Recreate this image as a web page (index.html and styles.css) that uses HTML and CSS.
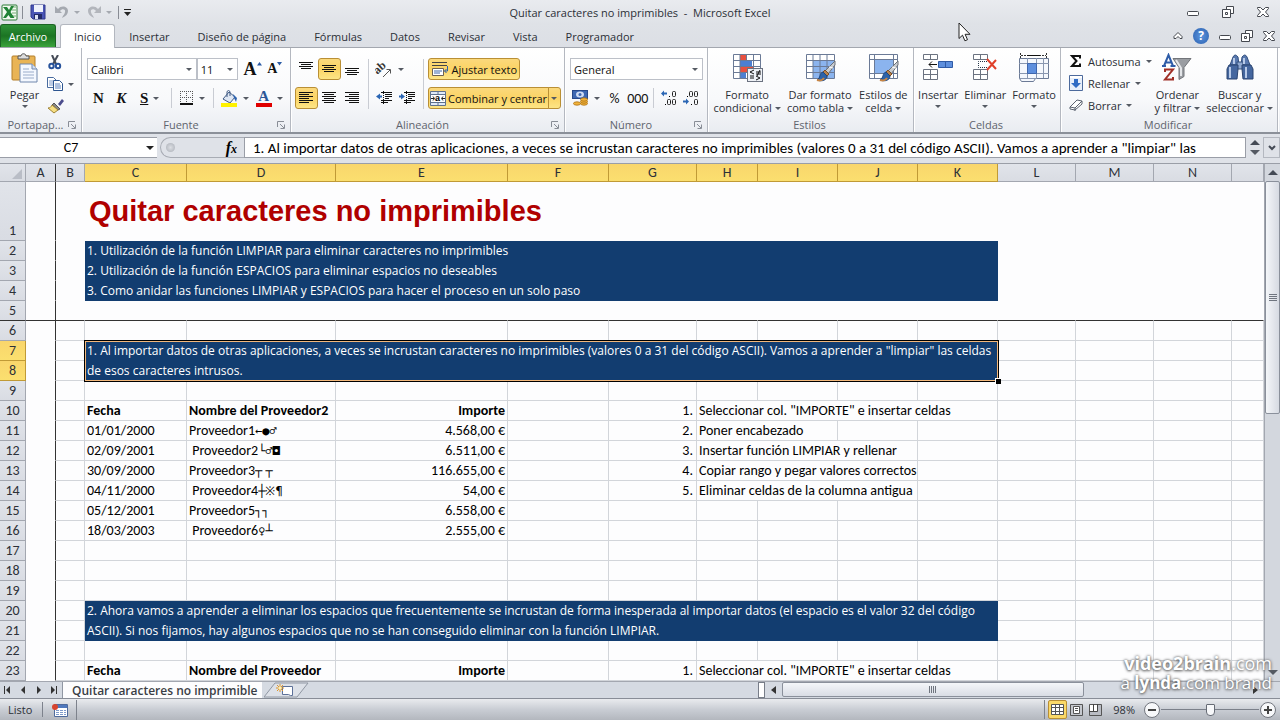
FILE: index.html
```html
<!DOCTYPE html>
<html lang="es">
<head>
  <meta charset="UTF-8">
  <meta name="viewport" content="width=device-width, initial-scale=1.0">
  <title>Quitar caracteres no imprimibles - Microsoft Excel</title>
  <link rel="stylesheet" href="styles.css">
</head>
<body>
  <header class="titlebar">
    <div class="quick">
      <svg width="17" height="17" viewBox="0 0 17 17"><rect x="1" y="1" width="15" height="15" rx="1" fill="#f3faf1" stroke="#2c7a37"/><path d="M11 3h4M11 6h4M11 9h4M11 12h4" stroke="#70ae72"/><path d="M2 3h4l2 3 2-4h3L9.500 8l4 6H9.500L7.500 11 5 14H2l4-6z" fill="#218336"/></svg>
      <span class="bar"></span>
      <button class="qbtn" aria-label="Guardar"><svg width="16" height="16" viewBox="0 0 16 16"><path d="M1 1h14v14H3l-2-2z" fill="#4a55b5" stroke="#30388d"/><rect x="4" y="1" width="9" height="7" fill="#eef1fb"/><rect x="4" y="10" width="8" height="5" fill="#222a66"/><rect x="5" y="11" width="3" height="4" fill="#dfe3f6"/></svg></button>
      <button class="qbtn wide" aria-label="Deshacer"><svg width="14" height="14" viewBox="0 0 14 14"><path d="M0 1v7h7L5 6c2-3 6-2 5 1 0 2-2 3-3 6 4-2 6-4 6-7 0-5-7-6-10-2z" fill="#a5a9b0"/></svg><i class="arrow dim"></i></button>
      <button class="qbtn wide" aria-label="Rehacer"><svg width="14" height="14" viewBox="0 0 14 14"><path d="M14 1v7H7l2-2C7 3 3 4 4 7c0 2 2 3 3 6-4-2-6-4-6-7 0-5 7-6 10-2z" fill="#b3b6bc"/></svg><i class="arrow dim"></i></button>
      <span class="bar"></span>
      <button class="qbtn more" aria-label="Personalizar"><svg width="7" height="7" viewBox="0 0 7 7"><path d="M0 0h7v1H0zM0 3h7L3.500 7z" fill="#222"/></svg></button>
    </div>
    <h1>Quitar caracteres no imprimibles&nbsp; -&nbsp; Microsoft Excel</h1>
    <div class="wincontrols">
      <button aria-label="Minimizar"><svg width="12" height="12"><use href="#w-min"/></svg></button>
      <button aria-label="Restaurar"><svg width="12" height="12"><use href="#w-res"/></svg></button>
      <button aria-label="Cerrar"><svg width="12" height="12"><use href="#w-close"/></svg></button>
    </div>
  </header>

  <svg class="defs" width="0" height="0">
    <symbol id="w-min" viewBox="0 0 12 12"><rect x=".5" y="5.500" width="11" height="4" rx="1" fill="#fff" stroke="#45484f"/></symbol>
    <symbol id="w-res" viewBox="0 0 12 12"><path d="M4.500 .5h7v7h-7z" fill="#fff" stroke="#45484f"/><path d="M.5 3.500h8v8h-8z" fill="#fff" stroke="#45484f"/><path d="M3.500 6.500h2v2h-2z" fill="none" stroke="#45484f"/></symbol>
    <symbol id="w-close" viewBox="0 0 12 12"><path d="M.5 1.500h3L6 4l2.500-2.500h3v1L8.500 6l3 3.500v1h-3L6 8l-2.500 2.500h-3v-1L3.500 6l-3-3.500z" fill="#fff" stroke="#45484f"/></symbol>
    <symbol id="launch" viewBox="0 0 8 8"><path d="M.5 6V.5H7M3 3l4 4M7.500 3.500v4h-4" fill="none" stroke="#888d96"/></symbol>
    <symbol id="brush" viewBox="0 0 20 22"><path d="M19 1 9 11l3 3 7-9z" fill="#c9cdd2" stroke="#6d7177"/><path d="m13 7 4 1" stroke="#fff"/><path d="m7 12 2-2 4 4-2 2z" fill="#b9824b" stroke="#7c4e25"/><path d="M7 12c-4 1-2 6-6 8 5 2 10 0 10-4z" fill="#2e63a8" stroke="#1d4680"/><path d="M1 20c3 1 6 0 7-2" stroke="#c78544" stroke-width="2" fill="none"/></symbol>
  </svg>

  <nav class="tabs">
    <button class="file">Archivo</button>
    <button class="tab active">Inicio</button>
    <button class="tab">Insertar</button>
    <button class="tab">Diseño de página</button>
    <button class="tab">Fórmulas</button>
    <button class="tab">Datos</button>
    <button class="tab">Revisar</button>
    <button class="tab">Vista</button>
    <button class="tab">Programador</button>
    <div class="tabtools">
      <button aria-label="Minimizar la cinta"><svg width="10" height="8" viewBox="0 0 10 8"><path d="M5 .5 9 4.500v2H7L5 4.500 3 6.500H1v-2z" fill="#fff" stroke="#45484f"/></svg></button>
      <button class="help" aria-label="Ayuda">?</button>
      <button aria-label="Minimizar libro"><svg width="12" height="12"><use href="#w-min"/></svg></button>
      <button aria-label="Restaurar libro"><svg width="12" height="12"><use href="#w-res"/></svg></button>
      <button aria-label="Cerrar libro"><svg width="12" height="12"><use href="#w-close"/></svg></button>
    </div>
  </nav>

  <section class="ribbon">
    <div class="group clipboard">
      <div class="body">
        <button class="big">
          <svg width="28" height="30" viewBox="0 0 28 30"><rect x="1" y="3" width="23" height="24" rx="1" fill="#e9b455" stroke="#b37f2b"/><path d="M7 6V3h3c0-3 5-3 5 0h3v3z" fill="#ddd" stroke="#555"/><path d="M9 11h12l5 5v13H9z" fill="#f4f8ff" stroke="#7088ad"/><path d="M21 11v5h5" fill="#d5e1f3" stroke="#7088ad"/><path d="M12 16h6M12 19h11M12 22h11M12 25h11" stroke="#9aacca"/></svg>
          <span>Pegar</span><i class="arrow"></i>
        </button>
        <div class="stack">
          <button class="small" aria-label="Cortar"><svg width="16" height="15" viewBox="0 0 16 15"><path d="m5 0 4 9M11 0 6 9" stroke="#454b57" stroke-width="2"/><circle cx="4.500" cy="11" r="2.200" fill="none" stroke="#27529b" stroke-width="2"/><circle cx="11" cy="11" r="2.200" fill="none" stroke="#27529b" stroke-width="2"/></svg></button>
          <button class="small" aria-label="Copiar"><svg width="16" height="14" viewBox="0 0 16 14"><path d="M.5 .5h6l3 3v7h-9z" fill="#fff" stroke="#486b9f"/><path d="M2 4h4M2 6h4M2 8h4" stroke="#7d9aca"/><path d="M6.500 3.500h6l3 3v7h-9z" fill="#fff" stroke="#2d5590"/><path d="M8 7h5M8 9h6M8 11h6" stroke="#5d82be"/></svg><i class="arrow"></i></button>
          <button class="small" aria-label="Copiar formato"><svg width="17" height="15" viewBox="0 0 17 15"><path d="m11 5 4-5 2 2-4 5z" fill="#4b4c8c"/><path d="m7 4 6 6-2 1-6-5z" fill="#888" stroke="#555"/><path d="m5 6 6 5-4 3-6-5c2 0 3-1 4-3z" fill="#f6df83" stroke="#9f8336"/></svg></button>
        </div>
      </div>
      <div class="caption"><span>Portapap...</span><button aria-label="Portapapeles"><svg width="8" height="8"><use href="#launch"/></svg></button></div>
    </div>

    <div class="group font">
      <div class="body lines">
        <div class="line">
          <label class="combo family"><select aria-label="Fuente"><option>Calibri</option></select><i class="arrow"></i></label>
          <label class="combo size"><select aria-label="Tamaño"><option>11</option></select><i class="arrow"></i></label>
          <button class="tool serif grow">A<svg width="5" height="4" viewBox="0 0 5 4"><path d="M0 3.500 2.500 0 5 3.500z" fill="#2a5aa5"/></svg></button>
          <button class="tool serif shrink">A<svg width="5" height="4" viewBox="0 0 5 4"><path d="M0 0h5L2.500 3.500z" fill="#2a5aa5"/></svg></button>
        </div>
        <div class="line">
          <button class="tool serif bold">N</button>
          <button class="tool serif italic">K</button>
          <button class="tool serif split"><u>S</u><i class="arrow"></i></button>
          <span class="sep"></span>
          <button class="tool split" aria-label="Bordes"><svg width="14" height="14" viewBox="0 0 14 14"><path d="M0 .5h13M0 6.500h13M.5 0v12M6.500 0v12M12.500 0v12" stroke="#555" stroke-dasharray="1 1"/><path d="M0 13h13" stroke="#111" stroke-width="2"/></svg><i class="arrow"></i></button>
          <span class="sep"></span>
          <button class="tool split" aria-label="Color de relleno"><svg width="17" height="17" viewBox="0 0 17 17"><path d="m8 2 6 5-5 6-7-4z" fill="#dfe7f3" stroke="#405a83"/><path d="M6 7V1.500q1.500-2 3 0V6" fill="none" stroke="#405a83"/><path d="m12 4 4 4-1 4-2-4z" fill="#2e62ad"/><path d="M0 13h16v4H0z" fill="#fff200"/></svg><i class="arrow"></i></button>
          <button class="tool split fontcolor" aria-label="Color de fuente"><b>A</b><i class="arrow"></i></button>
        </div>
      </div>
      <div class="caption"><span>Fuente</span><button aria-label="Más fuente"><svg width="8" height="8"><use href="#launch"/></svg></button></div>
    </div>

    <div class="group align">
      <div class="body">
        <div class="lines">
          <div class="line">
            <button class="tool" aria-label="Arriba"><svg width="14" height="14" viewBox="0 0 14 14"><path d="M0 .5h14M2 2.500h10M0 4.500h14M2 6.500h10" stroke="#111"/></svg></button>
            <button class="tool on" aria-label="Medio"><svg width="14" height="14" viewBox="0 0 14 14"><path d="M0 3.500h14M2 5.500h10M0 7.500h14M2 9.500h10" stroke="#111"/></svg></button>
            <button class="tool" aria-label="Abajo"><svg width="14" height="14" viewBox="0 0 14 14"><path d="M0 6.500h14M2 8.500h10M0 10.500h14M2 12.500h10" stroke="#111"/></svg></button>
          </div>
          <div class="line">
            <button class="tool on" aria-label="Izquierda"><svg width="14" height="14" viewBox="0 0 14 14"><path d="M0 1.500h14M0 3.500h10M0 5.500h14M0 7.500h10M0 9.500h14M0 11.500h10" stroke="#111"/></svg></button>
            <button class="tool" aria-label="Centrar"><svg width="14" height="14" viewBox="0 0 14 14"><path d="M0 1.500h14M2 3.500h10M0 5.500h14M2 7.500h10M0 9.500h14M2 11.500h10" stroke="#111"/></svg></button>
            <button class="tool" aria-label="Derecha"><svg width="14" height="14" viewBox="0 0 14 14"><path d="M0 1.500h14M4 3.500h10M0 5.500h14M4 7.500h10M0 9.500h14M4 11.500h10" stroke="#111"/></svg></button>
          </div>
        </div>
        <span class="sep tall"></span>
        <div class="lines">
          <div class="line">
            <button class="tool split" aria-label="Orientación"><svg width="18" height="18" viewBox="0 0 18 18"><text x="0" y="11" font-size="12" font-weight="bold" font-family="Liberation Serif, serif" fill="#333" transform="rotate(-42 6 10)">ab</text><path d="m8 17 7-7M11.500 9.500h4v4" stroke="#555" fill="none"/></svg><i class="arrow"></i></button>
          </div>
          <div class="line">
            <button class="tool" aria-label="Disminuir sangría"><svg width="16" height="14" viewBox="0 0 16 14"><path d="M5 1.500h11M9 3.500h7M9 5.500h7M9 7.500h4M5 9.500h11M5 11.500h7" stroke="#111"/><path d="M7.500 0v14" stroke="#111" stroke-dasharray="1 1"/><path d="m0 5.500 4-3v2h2v2H4v2z" fill="#2b66b4"/></svg></button>
            <button class="tool" aria-label="Aumentar sangría"><svg width="16" height="14" viewBox="0 0 16 14"><path d="M5 1.500h11M9 3.500h7M9 5.500h7M9 7.500h4M5 9.500h11M5 11.500h7" stroke="#111"/><path d="M7.500 0v14" stroke="#111" stroke-dasharray="1 1"/><path d="m6 5.500-4-3v2H0v2h2v2z" fill="#2b66b4"/></svg></button>
          </div>
        </div>
        <span class="sep tall"></span>
        <div class="lines">
          <div class="line">
            <button class="tool on text wrap"><svg width="17" height="16" viewBox="0 0 17 16"><path d="M0 1.500h15M0 4.500h15" stroke="#444"/><path d="M.5 7.500h11v7H.5z" fill="#fff" stroke="#6c6252"/><path d="M2 10h8M2 12h6" stroke="#3c68aa"/><path d="M15.500 5v5h-3m2-2-2 2 2 2" stroke="#2f60a8" fill="none"/></svg>Ajustar texto</button>
          </div>
          <div class="line">
            <button class="tool on text merge"><svg width="16" height="15" viewBox="0 0 16 15"><path d="M.5 .5h15v14H.5z" fill="#dfe9f8" stroke="#5f718c"/><path d="M1 3.500h15M1 11.500h15M8 1v3M8 11v3" stroke="#5f718c"/><path d="M1 4h14v7H1z" fill="#fff"/><path d="M1 7.500h3m-1-2 1.500 2L3 9.500M15 7.500h-3m1-2-1.500 2 1.500 2" stroke="#222" fill="none"/><text x="5" y="10" font-size="9" font-weight="bold" font-family="Liberation Sans, sans-serif">a</text></svg>Combinar y centrar</button><button class="tool on drop" aria-label="Opciones de combinar"><i class="arrow"></i></button>
          </div>
        </div>
      </div>
      <div class="caption"><span>Alineación</span><button aria-label="Más alineación"><svg width="8" height="8"><use href="#launch"/></svg></button></div>
    </div>

    <div class="group number">
      <div class="body lines">
        <div class="line"><label class="combo format"><select aria-label="Formato de número"><option>General</option></select><i class="arrow"></i></label></div>
        <div class="line">
          <button class="tool split" aria-label="Moneda"><svg width="17" height="16" viewBox="0 0 17 16"><rect x=".5" y=".5" width="15" height="8" fill="#3e68b2" stroke="#27488a"/><ellipse cx="8" cy="4.500" rx="4" ry="3" fill="#cfdcf4"/><circle cx="8" cy="4.500" r="1.500" fill="#3e68b2"/><g fill="#f2b33a" stroke="#a96f11" stroke-width=".8"><ellipse cx="12" cy="13.500" rx="3.500" ry="1.700"/><ellipse cx="12" cy="11.500" rx="3.500" ry="1.700"/><ellipse cx="12" cy="9.500" rx="3.500" ry="1.700"/><ellipse cx="5" cy="13.500" rx="3.500" ry="1.700"/></g></svg><i class="arrow"></i></button>
          <button class="tool num">%</button>
          <button class="tool num">000</button>
          <span class="sep"></span>
          <button class="tool dec" aria-label="Aumentar decimales"><svg width="17" height="16" viewBox="0 0 17 16"><path d="m0 3.500 3-3v2h3v2H3v2z" fill="#2b66b4"/><g fill="none" stroke="#222"><rect x="11.500" y="1.500" width="3" height="5" rx="1"/><rect x="6.500" y="9.500" width="3" height="5" rx="1"/><rect x="11.500" y="9.500" width="3" height="5" rx="1"/></g><path d="M8 6h1v1H8zM4 14h1v1H4z"/></svg></button>
          <button class="tool dec" aria-label="Disminuir decimales"><svg width="17" height="16" viewBox="0 0 17 16"><path d="m6 11.500-3-3v2H0v2h3v2z" fill="#2b66b4"/><g fill="none" stroke="#222"><rect x="6.500" y="1.500" width="3" height="5" rx="1"/><rect x="11.500" y="1.500" width="3" height="5" rx="1"/><rect x="11.500" y="9.500" width="3" height="5" rx="1"/></g><path d="M4 6h1v1H4zM8 14h1v1H8z"/></svg></button>
        </div>
      </div>
      <div class="caption"><span>Número</span><button aria-label="Más número"><svg width="8" height="8"><use href="#launch"/></svg></button></div>
    </div>

    <div class="group styles">
      <div class="body">
        <button class="big"><svg width="32" height="30" viewBox="0 0 32 30"><path d="M2.500 1.500h27v24h-27z" fill="#fff"/><path d="M9 2h7v5H9z" fill="#e8503f"/><path d="M9 8h12v5H9z" fill="#4d7fd2"/><path d="M9 14h13v5H9z" fill="#e8503f"/><path d="M9 20h6v5H9z" fill="#4d7fd2"/><path d="M2.500 1.500h27v24h-27zM2 7.500h28M2 13.500h28M2 19.500h28M9 1v24M15.500 1v6M22.500 1v24" fill="none" stroke="#6b7a96"/><rect x="16.500" y="15.500" width="15" height="13" fill="#eef1f6" stroke="#6b7280"/><path d="m23 17-4 2 4 2m-4 2h4m-4 2h4M25 19h5m-5 2h5m-1-4-3 6M25 23l4 2-4 2" stroke="#111" fill="none"/></svg><span>Formato<br>condicional<i class="arrow"></i></span></button>
        <button class="big"><svg width="32" height="30" viewBox="0 0 32 30"><path d="M2.500 1.500h28v24h-28z" fill="#fff"/><path d="M9 8h21v17H9z" fill="#8bb4ee"/><path d="M2.500 1.500h28v24h-28zM2 7.500h28M2 13.500h28M2 19.500h28M9 1v24M16 1v24M23 1v24" fill="none" stroke="#6b7a96"/><svg x="12" y="7" width="20" height="22"><use href="#brush"/></svg></svg><span>Dar formato<br>como tabla<i class="arrow"></i></span></button>
        <button class="big"><svg width="32" height="30" viewBox="0 0 32 30"><path d="M2.500 1.500h28v24h-28z" fill="#fff"/><path d="M7 6h20v14H7z" fill="#8bb4ee"/><path d="M2.500 1.500h28v24h-28zM2 6.500h28M2 20.500h28M7.500 1v24M26.500 1v24" fill="none" stroke="#6b7a96"/><svg x="12" y="7" width="20" height="22"><use href="#brush"/></svg></svg><span>Estilos de<br>celda<i class="arrow"></i></span></button>
      </div>
      <div class="caption"><span>Estilos</span></div>
    </div>

    <div class="group cells">
      <div class="body">
        <button class="big"><svg width="32" height="30" viewBox="0 0 32 30"><path d="M1.500 1.500h14v5h-14zM8.500 1v6M1.500 16.500h14v10h-14zM8.500 16v11M1 21.500h15" fill="#fff" stroke="#6b7280"/><path d="M16.500 8.500h14v6h-14z" fill="#5e8fdd" stroke="#2f5aa5"/><path d="M23.500 9v6" stroke="#2f5aa5"/><path d="M7 11.500h8m-5-3-3 3 3 3" fill="none" stroke="#111"/></svg><span>Insertar</span><i class="arrow"></i></button>
        <button class="big"><svg width="30" height="30" viewBox="0 0 30 30"><path d="M3.500 1.500h14v5h-14zM10.500 1v6M3.500 16.500h14v10h-14zM10.500 16v11M3 21.500h15" fill="#fff" stroke="#6b7280"/><path d="M17 8.500H8.500v6H17" fill="none" stroke="#234" stroke-dasharray="1 1"/><path d="m17 6 9 10M26 7l-9 10" stroke="#e0402a" stroke-width="2"/></svg><span>Eliminar</span><i class="arrow"></i></button>
        <button class="big"><svg width="32" height="30" viewBox="0 0 32 30"><path d="M2.500 0v5M28.500 0v5M3 2.500h25" stroke="#333" stroke-dasharray="2 1"/><path d="M9 2.500h13" stroke="#111"/><path d="M1.500 5.500h29v20h-13l-2 3H3.500l-2-3z" fill="#f5f8fd" stroke="#6b7a96"/><path d="M1 10.500h30M1 20.500h30M1 25.500h18M9.500 5v20M18.500 5v20M25.500 5v20" stroke="#8997b0"/><path d="M9.500 10.500h9v10h-9z" fill="#5e8fdd" stroke="#3e66ad"/></svg><span>Formato</span><i class="arrow"></i></button>
      </div>
      <div class="caption"><span>Celdas</span></div>
    </div>

    <div class="group edit">
      <div class="body">
        <div class="stack">
          <button class="small"><svg width="14" height="14" viewBox="0 0 14 14"><path d="M11 4.500V2H3l4.500 5L3 12h8V9.500" fill="none" stroke="#111" stroke-width="2"/></svg>Autosuma<i class="arrow"></i></button>
          <button class="small"><svg width="14" height="16" viewBox="0 0 14 16"><path d="M.5 .5h13v15H.5z" fill="#e8effa" stroke="#4d6a9c"/><path d="M1 1h12v2H1z" fill="#fff"/><path d="M5 4h4v4h3l-5 5-5-5h3z" fill="#2f6bc4"/></svg>Rellenar<i class="arrow"></i></button>
          <button class="small"><svg width="14" height="14" viewBox="0 0 14 14"><path d="m1 9 7-7 5 1v3l-7 6-5-1z" fill="#fff" stroke="#5b6270"/><path d="m1 9 5 1 7-7M6 10v3" stroke="#5b6270" fill="none"/></svg>Borrar<i class="arrow"></i></button>
        </div>
        <button class="big sort"><svg width="30" height="30" viewBox="0 0 30 30"><path d="M11 5.500h18l-7 9v9l-5 3v-12z" fill="#9a9da2" stroke="#72757a"/><path d="m14 7 5 8v8" stroke="#e4e6e9" fill="none" stroke-width="2"/><path d="M2 13 6.500 2 11 13M4 9.500h5M0 13h4M8.500 13h5" stroke="#2e5ca8" stroke-width="2" fill="none"/><path d="M3 19v-2.500h8l-8 10h8V24" stroke="#a03028" stroke-width="2" fill="none"/></svg><span>Ordenar<br>y filtrar<i class="arrow"></i></span></button>
        <button class="big find"><svg width="30" height="30" viewBox="0 0 30 30"><path d="M8 4q2-4 5 0l1 8H5zM22 4q-2-4-5 0l-1 8h9z" fill="#5878ae" stroke="#33507f"/><path d="M12 9h6v7h-6z" fill="#8fa8d0" stroke="#33507f"/><path d="M4 12h9v4l-1 10H2V16zM26 12h-9v4l1 10h10V16z" fill="#45679f" stroke="#2a4470"/><path d="M5 14v11M21 14v11M9 5v6M19 5v6" stroke="#b9cbe8" stroke-width="2"/></svg><span>Buscar y<br>seleccionar<i class="arrow"></i></span></button>
      </div>
      <div class="caption"><span>Modificar</span></div>
    </div>
  </section>

  <section class="formulabar">
    <label class="namebox"><input value="C7" aria-label="Cuadro de nombres"><i class="arrow black"></i></label>
    <button class="fx" aria-label="Insertar función"><span class="knob"></span><span class="fxtext">f<small>x</small></span></button>
    <input class="formula" aria-label="Fórmula" value="1. Al importar datos de otras aplicaciones, a veces se incrustan caracteres no imprimibles (valores 0 a 31 del código ASCII). Vamos a aprender a &quot;limpiar&quot; las">
    <div class="spin"><i class="arrow up"></i><i class="arrow"></i></div>
    <button class="expand" aria-label="Expandir"><svg width="8" height="6" viewBox="0 0 8 6"><path d="m1 1 3 3 3-3" fill="none" stroke="#444a55" stroke-width="2"/></svg></button>
  </section>

  <main class="workbook">
    <table class="sheet">
      <colgroup>
        <col class="c-row"><col class="c-a"><col class="c-b"><col class="c-c"><col class="c-d"><col class="c-e"><col class="c-f"><col class="c-g"><col class="c-h"><col class="c-i"><col class="c-i"><col class="c-i"><col class="c-l"><col class="c-l"><col class="c-l"><col>
      </colgroup>
      <thead><tr id="letters"><th class="corner"><svg width="10" height="10" viewBox="0 0 10 10"><path d="M10 0v10H0z" fill="#b9bdc6"/></svg></th></tr></thead>
      <tbody id="rows"></tbody>
    </table>
    <div class="vscroll">
      <button aria-label="Subir"><i class="arrow up"></i></button>
      <div class="vthumb"><span></span></div>
      <button class="down" aria-label="Bajar"><i class="arrow"></i></button>
    </div>
  </main>

  <footer>
    <div class="sheettabs">
      <div class="navs">
        <button aria-label="Primera"><svg width="8" height="8" viewBox="0 0 8 8"><path d="M0 0h1v8H0zM6 0v8L2 4z"/></svg></button>
        <button aria-label="Anterior"><svg width="8" height="8" viewBox="0 0 8 8"><path d="M6 0v8L2 4z"/></svg></button>
        <button aria-label="Siguiente"><svg width="8" height="8" viewBox="0 0 8 8"><path d="M2 0v8l4-4z"/></svg></button>
        <button aria-label="Última"><svg width="8" height="8" viewBox="0 0 8 8"><path d="M1 0v8l4-4zM6 0h1v8H6z"/></svg></button>
      </div>
      <button class="sheettab">Quitar caracteres no imprimible</button>
      <button class="newtab" aria-label="Insertar hoja"><svg width="46" height="16" viewBox="0 0 46 16"><path d="M0 15 11 1h33L33 15z" fill="#dde1e8" stroke="#9097a3"/><path d="M18.500 4.500h10v9h-2l-2-1h-6z" fill="#fff" stroke="#5d7199"/><path d="M16 2v8M12 6h8M13 3l6 6M19 3l-6 6" stroke="#e0962b"/><circle cx="16" cy="6" r="1.500" fill="#fff3b0"/></svg></button>
      <span class="splitter"></span>
      <div class="hscroll">
        <button aria-label="Izquierda"><svg width="5" height="8" viewBox="0 0 5 8"><path d="M5 0v8L0 4z" fill="#333"/></svg></button>
        <div class="track"><div class="hthumb"><span></span></div></div>
        <button aria-label="Derecha"><svg width="5" height="8" viewBox="0 0 5 8"><path d="M0 0v8l5-4z" fill="#333"/></svg></button>
      </div>
    </div>
    <div class="status">
      <span class="ready">Listo</span>
      <button class="macro" aria-label="Grabar macro"><svg width="16" height="14" viewBox="0 0 16 14"><path d="M2.500 1.500h13v12h-13z" fill="#fff" stroke="#4e6a9c"/><path d="M3 2h12v3H3z" fill="#4f78bd"/><path d="M4 7.500h3M8 7.500h3M12 7.500h2M4 9.500h3M8 9.500h3M12 9.500h2M4 11.500h3M8 11.500h3M12 11.500h2" stroke="#7f9ccc"/><circle cx="3" cy="4" r="3" fill="#d8442e"/></svg></button>
      <div class="views">
        <button class="on" aria-label="Normal"><svg width="13" height="11" viewBox="0 0 13 11"><path d="M.5 .5h12v10H.5zM0 3.500h13M0 7.500h13M4.500 0v11M8.500 0v11" fill="#fff" stroke="#555"/></svg></button>
        <button aria-label="Diseño de página"><svg width="13" height="12" viewBox="0 0 13 12"><path d="M.5 .5h12v11H.5z" fill="#c5c8ce" stroke="#555"/><path d="M3.500 2.500h6v7h-6z" fill="#fff" stroke="#555"/><path d="M5 4.500h3M5 6.500h3" stroke="#555"/></svg></button>
        <button aria-label="Salto de página"><svg width="13" height="12" viewBox="0 0 13 12"><path d="M.5 .5h12v11H.5z" fill="#b9bcc3" stroke="#555"/><path d="M1 1h3v6H1zM5 1h3v6H5z" fill="#fff"/><path d="M4.500 0v7M8.500 0v7.500H0" stroke="#444" fill="none"/></svg></button>
      </div>
      <label class="zoomvalue" for="zoom">98%</label>
      <button class="round" aria-label="Alejar"><svg width="16" height="16" viewBox="0 0 16 16"><circle cx="8" cy="8" r="7.500" fill="#f7f8fa" stroke="#72767e"/><path d="M4 8h8" stroke="#444" stroke-width="2"/></svg></button>
      <input type="range" id="zoom" min="10" max="190" value="102">
      <button class="round" aria-label="Acercar"><svg width="16" height="16" viewBox="0 0 16 16"><circle cx="8" cy="8" r="7.500" fill="#f7f8fa" stroke="#72767e"/><path d="M4 8h8M8 4v8" stroke="#444" stroke-width="2"/></svg></button>
    </div>
  </footer>

  <svg class="pointer" width="13" height="20" viewBox="0 0 13 20"><path d="M1 1v15.500l3.500-3.300 2.400 5.600 2.600-1.100-2.400-5.400H12z" fill="#fff" stroke="#222"/></svg>
  <div class="watermark"><p><b>video2brain</b>.com</p><p>a <b>lynda</b>.com brand</p></div>

<script>
const letters = 'ABCDEFGHIJKLMNO'.split('');
// row -> { column: [text, class, colspan, rowspan] }
const cells = {
  1: { C: ['Quitar caracteres no imprimibles', 'title', 9] },
  2: { C: ['1. Utilización de la función LIMPIAR para eliminar caracteres no imprimibles', 'blue', 9] },
  3: { C: ['2. Utilización de la función ESPACIOS para eliminar espacios no deseables', 'blue', 9] },
  4: { C: ['3. Como anidar las funciones LIMPIAR y ESPACIOS para hacer el proceso en un solo paso', 'blue', 9] },
  7: { C: ['1. Al importar datos de otras aplicaciones, a veces se incrustan caracteres no imprimibles (valores 0 a 31 del código ASCII). Vamos a aprender a "limpiar" las celdas de esos caracteres intrusos.', 'blue selected', 9, 2] },
  10: { C: ['Fecha', 'strong'], D: ['Nombre del Proveedor2', 'strong'], E: ['Importe', 'strong right'], G: ['1.', 'right item'], H: ['Seleccionar col. "IMPORTE" e insertar celdas', '', 4] },
  11: { C: ['01/01/2000'], D: ['Proveedor1<s>←●♂</s>'], E: ['4.568,00 €', 'right'], G: ['2.', 'right item'], H: ['Poner encabezado', '', 2] },
  12: { C: ['02/09/2001'], D: ['&nbsp;Proveedor2<s>└♂◘</s>'], E: ['6.511,00 €', 'right'], G: ['3.', 'right item'], H: ['Insertar función LIMPIAR y rellenar', '', 3] },
  13: { C: ['30/09/2000'], D: ['Proveedor3<s>┬</s> <s>┬</s>'], E: ['116.655,00 €', 'right'], G: ['4.', 'right item'], H: ['Copiar rango y pegar valores correctos', '', 3] },
  14: { C: ['04/11/2000'], D: ['&nbsp;Proveedor4<s>┼※¶</s>'], E: ['54,00 €', 'right'], G: ['5.', 'right item'], H: ['Eliminar celdas de la columna antigua', '', 3] },
  15: { C: ['05/12/2001'], D: ['Proveedor5<s>┐┐</s>'], E: ['6.558,00 €', 'right'] },
  16: { C: ['18/03/2003'], D: ['&nbsp;Proveedor6<s>♀┴</s>'], E: ['2.555,00 €', 'right'] },
  20: { C: ['2. Ahora vamos a aprender a eliminar los espacios que frecuentemente se incrustan de forma inesperada al importar datos (el espacio es el valor 32 del código ASCII). Si nos fijamos, hay algunos espacios que no se han conseguido eliminar con la función LIMPIAR.', 'blue', 9, 2] },
  23: { C: ['Fecha', 'strong'], D: ['Nombre del Proveedor', 'strong'], E: ['Importe', 'strong right'], G: ['1.', 'right item'], H: ['Seleccionar col. "IMPORTE" e insertar celdas', '', 4] }
};

const head = document.getElementById('letters');
letters.forEach(l => {
  const th = document.createElement('th');
  th.textContent = l === 'O' ? '' : l;
  if (l >= 'C' && l <= 'K') th.className = 'hot';
  if (l === 'A') th.className = 'freeze';
  head.appendChild(th);
});

const tbody = document.getElementById('rows');
let covered = 0; // row whose C:K is taken by the merged block above
for (let r = 1; r <= 23; r++) {
  const tr = document.createElement('tr');
  tr.className = r === 1 ? 'frozen first' : r === 5 ? 'frozen last' : r < 5 ? 'frozen' : '';
  const hot = r === 7 || r === 8 ? ' class="hot"' : '';
  let html = `<th${hot}>${r}</th>`;
  for (let c = 0; c < letters.length; c++) {
    const l = letters[c];
    if (covered === r && l === 'C') { c += 8; continue; }
    const [text = '', cls = '', span = 1, down = 1] = (cells[r] || {})[l] || [];
    html += `<td class="${l === 'A' ? 'a' : cls}" colspan="${span}" rowspan="${down}">${text}</td>`;
    if (down > 1) covered = r + 1;
    c += span - 1;
  }
  tr.innerHTML = html;
  tbody.appendChild(tr);
}
</script>
</body>
</html>
```
FILE: styles.css
```css
* {
  box-sizing: border-box;
}
body {
  margin: 0;
  height: 100vh;
  display: flex;
  flex-direction: column;
  overflow: hidden;
  position: relative;
  background: #dfe2e8;
  color: #2b2f36;
  font-family: "Open Sans", "Noto Sans", sans-serif;
  font-size: 11px;
}
button {
  border: none;
  background: none;
  padding: 0;
  margin: 0;
  font: inherit;
  color: inherit;
  display: flex;
  align-items: center;
  justify-content: center;
}
svg {
  flex: none;
  display: block;
}
.defs {
  position: absolute;
}
.arrow {
  display: inline-block;
  flex: none;
  border: 3px solid transparent;
  border-top-color: #555a63;
  border-bottom: 0;
}
.arrow.dim {
  border-top-color: #a5a9b0;
}
.arrow.black {
  border-width: 4px 4px 0;
  border-top-color: #222;
}
.arrow.up {
  border-top: 0;
  border-bottom: 3px solid #444a55;
}

/* title bar */
.titlebar {
  flex: none;
  height: 24px;
  display: grid;
  grid-template-columns: 1fr auto 1fr;
  align-items: center;
  background: linear-gradient(#e9ebef, #dfe2e7);
}
.titlebar h1 {
  margin: 0;
  font-size: 11px;
  font-weight: normal;
}
.quick {
  display: flex;
  align-items: center;
  gap: 2px;
  padding-left: 1px;
}
.bar {
  width: 1px;
  height: 13px;
  margin-left: 2px;
  background: #888c94;
}
.qbtn {
  width: 25px;
  height: 20px;
}
.qbtn.wide {
  width: 30px;
  gap: 5px;
}
.qbtn.more {
  width: 13px;
}
.wincontrols {
  display: flex;
  justify-content: flex-end;
  gap: 23px;
  padding-right: 11px;
}

/* ribbon tabs */
.tabs {
  flex: none;
  height: 24px;
  display: flex;
  align-items: stretch;
  border-bottom: 1px solid #a3a7af;
  background: linear-gradient(#dfe2e7, #dcdfe5);
}
.file {
  width: 56px;
  margin-right: 4px;
  border: 1px solid #1c6424;
  border-bottom: 0;
  border-radius: 3px 3px 0 0;
  background: linear-gradient(#2f9138, #1b7423 50%, #3ba33b);
  color: #fff;
}
.tab {
  padding: 0 13px;
  border: 1px solid transparent;
  border-bottom: 0;
  white-space: nowrap;
}
.tab.active {
  margin-bottom: -1px;
  border-color: #b3b7bf;
  border-radius: 3px 3px 0 0;
  background: #fff;
}
.tabtools {
  margin-left: auto;
  display: flex;
  align-items: center;
  gap: 10px;
  padding-right: 5px;
}
.help {
  width: 16px;
  height: 16px;
  border-radius: 50%;
  background: radial-gradient(#5c95dd, #2a60b0);
  color: #fff;
  font-size: 12px;
  font-weight: bold;
}

/* ribbon */
.ribbon {
  flex: none;
  height: 86px;
  display: flex;
  border-bottom: 2px solid #8b9099;
  background: linear-gradient(#fff, #f8f9fb 60%, #e9ecf1);
}
.group {
  flex: none;
  display: flex;
  flex-direction: column;
  border-right: 1px solid #b4b8c0;
  box-shadow: 1px 0 #fff;
}
.group .body {
  flex: 1;
  min-height: 0;
  display: flex;
  justify-content: center;
}
.clipboard { width: 82px; }
.font { width: 209px; }
.align { width: 274px; }
.number { width: 143px; }
.styles { width: 206px; }
.cells { width: 147px; }
.edit { width: 217px; }
.caption {
  flex: none;
  height: 15px;
  display: flex;
  align-items: center;
  padding: 0 5px 0 3px;
  color: #5f646d;
}
.caption span {
  flex: 1;
  text-align: center;
}
.lines {
  padding: 10px 4px 0 5px;
}
.group .body.lines {
  flex-direction: column;
  justify-content: flex-start;
}
.align .lines {
  padding: 10px 0 0;
}
.line {
  display: flex;
  align-items: center;
  height: 22px;
  margin-bottom: 7px;
}
.sep {
  width: 1px;
  height: 20px;
  margin: 0 4px;
  background: #c9ccd3;
}
.sep.tall {
  height: 50px;
  margin: 11px 4px 0;
}
.combo {
  display: grid;
  align-items: center;
  height: 22px;
  border: 1px solid #bcc0c8;
  background: #fff;
}
.combo > * {
  grid-area: 1 / 1;
}
.combo .arrow {
  justify-self: end;
  margin-right: 4px;
}
.combo select {
  appearance: none;
  width: 100%;
  border: 0;
  padding: 0 3px;
  background: none;
  color: #111;
  font: inherit;
}
.family { width: 113px; }
.size { width: 43px; }
.format { width: 134px; }
.tool {
  height: 22px;
  width: 23px;
  color: #111;
}
.tool.on {
  border: 1px solid #b98f35;
  border-radius: 3px;
  background: linear-gradient(#fbd97c, #fbd465 50%, #fde586);
}
.tool.split {
  width: 34px;
  gap: 5px;
}
.tool.text {
  width: auto;
  padding: 0 2px 0 3px;
  gap: 3px;
  white-space: nowrap;
}
.tool.merge {
  width: 121px;
  gap: 2px;
  border-radius: 3px 0 0 3px;
}
.tool.drop {
  width: 13px;
  margin-left: -1px;
  border-radius: 0 3px 3px 0;
}
.tool.num {
  width: 24px;
  font-family: Carlito, Lato, sans-serif;
  font-size: 14px;
}
.tool.serif {
  font-family: "Liberation Serif", serif;
  font-size: 15px;
  font-weight: bold;
}
.tool.italic {
  font-style: italic;
}
.tool.grow {
  margin-left: 3px;
  font-size: 18px;
}
.tool.shrink {
  font-size: 14px;
}
.grow svg, .shrink svg {
  align-self: flex-start;
  margin-top: 4px;
}
.fontcolor b {
  width: 16px;
  border-bottom: 4px solid #e00000;
  color: #2b5797;
  font-family: "Liberation Serif", serif;
  font-size: 15px;
  line-height: 13px;
}
.big {
  flex-direction: column;
  justify-content: flex-start;
  padding: 5px 3px 0;
  line-height: 13px;
  white-space: nowrap;
}
.big svg {
  margin-bottom: 5px;
}
.big > .arrow {
  margin-top: 4px;
}
.big span .arrow {
  margin-left: 3px;
  vertical-align: 2px;
}
.stack {
  display: flex;
  flex-direction: column;
  padding: 3px 0 0;
}
.small {
  height: 22px;
  gap: 5px;
  justify-content: flex-start;
  padding-left: 5px;
}
.edit .stack {
  padding: 2px 0 0 2px;
}

/* formula bar */
.formulabar {
  flex: none;
  height: 30px;
  display: flex;
  align-items: stretch;
  padding: 3px 0 5px;
  border-bottom: 1px solid #9a9ea7;
  background: #dfe2e8;
  color: #000;
  font-family: Carlito, Lato, sans-serif;
  font-size: 15px;
}
.formulabar input {
  border: 0;
  padding: 0;
  background: none;
  color: #000;
  font: inherit;
}
.namebox {
  width: 157px;
  display: flex;
  align-items: center;
  border-top: 1px solid #9a9ea7;
  border-bottom: 1px solid #9a9ea7;
  background: #fff;
}
.formulabar .namebox input {
  width: 142px;
  text-align: center;
  font-size: 14px;
}
.namebox .arrow {
  margin-left: 4px;
}
.fx {
  width: 84px;
  margin-left: 3px;
  padding: 0 7px 0 5px;
  justify-content: space-between;
  border: 1px solid #a8acb4;
  border-right: 0;
  border-radius: 11px 0 0 11px;
}
.knob {
  width: 9px;
  height: 9px;
  border-radius: 50%;
  background: radial-gradient(#dcdfe4, #a9adb5);
}
.fxtext {
  font: italic bold 16px "Liberation Serif", serif;
}
.fxtext small {
  font-size: 12px;
}
.formulabar .formula {
  flex: 1;
  min-width: 0;
  padding-left: 8px;
  border: 1px solid #9a9ea7;
  background: #fff;
}
.spin {
  width: 17px;
  display: flex;
  flex-direction: column;
  align-items: center;
  justify-content: space-around;
}
.spin .arrow {
  border-left-width: 5px;
  border-right-width: 5px;
}
.spin .arrow, .vscroll .down .arrow {
  border-top-width: 5px;
}
.spin .arrow.up, .vscroll .arrow.up {
  border-top-width: 0;
  border-bottom-width: 5px;
}
.expand {
  width: 17px;
  border: 1px solid #b4b8c0;
}

/* grid */
.workbook {
  flex: 1;
  min-height: 0;
  display: flex;
  overflow: hidden;
}
.sheet {
  flex: 1;
  width: 100%;
  table-layout: fixed;
  border-collapse: separate;
  border-spacing: 0;
  background: #fdfdfe;
  color: #000;
  font-family: Carlito, Lato, sans-serif;
  font-size: 14px;
}
.c-row { width: 26px; }
.c-a { width: 30px; }
.c-b { width: 29px; }
.c-c { width: 102px; }
.c-d { width: 149px; }
.c-e { width: 172px; }
.c-f { width: 101px; }
.c-g { width: 88px; }
.c-h { width: 61px; }
.c-i { width: 80px; }
.c-l { width: 78px; }
.sheet th {
  padding: 0;
  border-right: 1px solid #a3a7b0;
  border-bottom: 1px solid #a3a7b0;
  background: linear-gradient(#e1e4ea, #d9dce3);
  color: #2d3138;
  font-weight: normal;
  line-height: 17px;
}
.sheet tbody th {
  vertical-align: bottom;
  line-height: 19px;
}
.sheet th.corner svg {
  margin: 3px 0 0 12px;
}
.sheet th.freeze {
  border-right-color: #333;
}
.sheet th.hot {
  border-color: #c09a36;
  background: linear-gradient(#f9d66c, #fbdf6f);
}
.sheet td {
  height: 20px;
  padding: 0 2px;
  border-right: 1px solid #d2d5da;
  border-bottom: 1px solid #d2d5da;
  line-height: 19px;
  white-space: nowrap;
}
.sheet .a {
  border-right-color: #333;
  border-bottom-color: transparent;
}
.frozen td {
  border-color: transparent;
}
.first td {
  height: 59px;
}
.sheet .last td, .sheet .last th {
  border-bottom-color: #333;
}
.sheet .title {
  padding-left: 4px;
  color: #b00000;
  font: bold 29px "Liberation Sans", sans-serif;
}
.sheet .blue {
  border: 0;
  background: #123d70;
  color: #fff;
  font-family: "Open Sans", "Noto Sans", sans-serif;
  font-size: 12px;
  line-height: 20px;
  white-space: normal;
}
.sheet .selected {
  position: relative;
  outline: 1px solid #000;
  box-shadow: inset 0 0 0 1px #f2b87c;
}
.selected::after {
  content: "";
  position: absolute;
  right: -3px;
  bottom: -3px;
  width: 5px;
  height: 5px;
  border-top: 1px solid #fff;
  border-left: 1px solid #fff;
  background: #000;
}
.right {
  text-align: right;
}
.strong {
  font-weight: bold;
}
.sheet td.item {
  padding-right: 3px;
}
.sheet s {
  text-decoration: none;
  font-family: "DejaVu Sans Mono", monospace;
  font-size: 12px;
  line-height: 12px;
}
.vscroll {
  flex: none;
  width: 16px;
  display: flex;
  flex-direction: column;
  align-items: center;
  border-left: 1px solid #a3a7b0;
  background: #d3d7de;
}
.vscroll button {
  width: 15px;
  height: 17px;
}
.vscroll .arrow {
  border-left-width: 5px;
  border-right-width: 5px;
}
.vthumb {
  width: 15px;
  height: 45%;
  display: flex;
  align-items: center;
  justify-content: center;
  border: 1px solid #8a909b;
  border-radius: 2px;
  background: linear-gradient(90deg, #f4f6f9, #d6dae2);
}
.vthumb span {
  width: 8px;
  height: 7px;
  background: repeating-linear-gradient(#6f757f 0 1px, transparent 1px 2px);
}
.down {
  margin-top: auto;
}

/* sheet tabs and status bar */
footer {
  flex: none;
}
.sheettabs {
  height: 17px;
  display: flex;
  align-items: stretch;
  border-top: 1px solid #a3a7b0;
  background: #d5dae2;
}
.navs {
  width: 62px;
  display: flex;
  justify-content: space-around;
  fill: #333;
}
.sheettab {
  padding: 0 4px 0 9px;
  border-left: 1px solid #9097a3;
  background: #fdfdfe;
  color: #3a3e45;
  font-size: 12px;
  font-weight: 600;
  white-space: nowrap;
}
.newtab {
  padding-left: 2px;
}
.splitter {
  width: 7px;
  margin-left: auto;
  border: 1px solid #777d88;
  background: #fff;
}
.hscroll {
  width: 39%;
  margin-right: 16px;
  display: flex;
}
.hscroll button {
  width: 17px;
}
.track {
  flex: 1;
}
.hthumb {
  width: 65%;
  height: 15px;
  display: flex;
  align-items: center;
  justify-content: center;
  border: 1px solid #8a909b;
  border-radius: 2px;
  background: linear-gradient(#f4f6f9, #d9dde5);
}
.hthumb span {
  width: 7px;
  height: 7px;
  background: repeating-linear-gradient(90deg, #6f757f 0 1px, transparent 1px 2px);
}
.status {
  height: 22px;
  display: flex;
  align-items: center;
  border-top: 1px solid #888d97;
  background: linear-gradient(#e9ebee, #c9cdd4 50%, #b3b7be);
}
.ready {
  width: 43px;
  padding-left: 8px;
  border-right: 1px solid #7d828c;
}
.macro {
  width: 34px;
  height: 20px;
  border-right: 1px solid #7d828c;
}
.views {
  margin-left: auto;
  display: flex;
  border-left: 1px solid #7d828c;
  padding-left: 3px;
}
.views button {
  width: 19px;
  height: 19px;
}
.views .on {
  border: 1px solid #b98f35;
  border-radius: 2px;
  background: #fbd968;
}
.zoomvalue {
  padding: 0 8px;
}
#zoom {
  appearance: none;
  width: 98px;
  height: 14px;
  margin: 0;
  background: linear-gradient(#7b808a, #7b808a) center / 100% 1px no-repeat;
}
#zoom::-webkit-slider-thumb {
  appearance: none;
  width: 9px;
  height: 12px;
  border: 1px solid #666b75;
  border-radius: 1px 1px 4px 4px;
  background: #f7f8fa;
}
.round {
  width: 18px;
}
.round:last-child {
  margin-right: 3px;
}

/* overlays */
.pointer {
  position: absolute;
  left: 958px;
  top: 22px;
}
.watermark {
  position: absolute;
  right: 8px;
  bottom: 27px;
  color: #fff;
  font-family: "Open Sans", sans-serif;
  font-size: 18px;
  line-height: 20px;
  text-align: right;
  text-shadow: 0 0 3px #555, 0 1px 3px #777;
  pointer-events: none;
}
.watermark p {
  margin: 0;
}
.watermark p + p {
  font-size: 17px;
}
```
